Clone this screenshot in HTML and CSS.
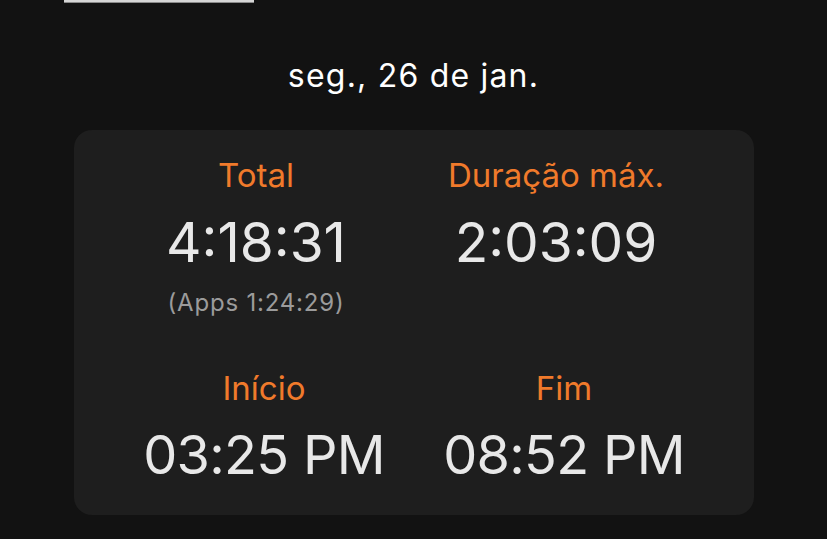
FILE: index.html
```html
<!DOCTYPE html>
<html lang="pt-BR">
<head>
<meta charset="utf-8">
<title>Resumo do dia</title>
<link rel="stylesheet" href="styles.css">
</head>
<body>
  <div class="page">
    <div class="topbar"></div>
    <h1 class="date">seg., 26 de jan.</h1>
    <section class="card">
      <div class="row row-top">
        <div class="cell">
          <div class="label">Total</div>
          <div class="value">4:18:31</div>
          <div class="sub">(Apps 1:24:29)</div>
        </div>
        <div class="cell">
          <div class="label">Duração máx.</div>
          <div class="value">2:03:09</div>
        </div>
      </div>
      <div class="row row-bottom">
        <div class="cell">
          <div class="label">Início</div>
          <div class="value value-time">03:25 PM</div>
        </div>
        <div class="cell">
          <div class="label">Fim</div>
          <div class="value value-time">08:52 PM</div>
        </div>
      </div>
    </section>
  </div>
</body>
</html>
```
FILE: styles.css
```css
* { box-sizing: border-box; }
html, body {
  margin: 0;
  padding: 0;
  background: #121212;
}
body {
  font-family: Inter, "Noto Sans", "Liberation Sans", sans-serif;
  color: #e6e6e6;
  width: 827px;
  height: 539px;
  overflow: hidden;
}
.page {
  display: flex;
  flex-direction: column;
  align-items: stretch;
}
.topbar {
  width: 190px;
  height: 3px;
  margin-left: 64px;
  background: #d6d6d6;
  border-bottom: 1px solid #8a8a8a;
}
.date {
  margin: 53px 0 0;
  font-size: 32px;
  line-height: 40px;
  font-weight: 400;
  letter-spacing: 1.2px;
  text-align: center;
  color: #ffffff;
}
.card {
  margin: 34px 0 0 74px;
  width: 680px;
  height: 385px;
  background: #1e1e1e;
  border-radius: 18px;
  padding: 25px 40px 0;
  display: flex;
  flex-direction: column;
  gap: 50px;
}
.row {
  display: grid;
  grid-template-columns: 1fr 1fr;
  align-items: start;
}
.row-top {
  margin: 0 8px 0 -8px;
}
.cell {
  display: flex;
  flex-direction: column;
  align-items: center;
  gap: 15px;
}
.label {
  font-size: 33px;
  line-height: 40px;
  color: #f07a2b;
}
.value {
  font-size: 55px;
  line-height: 64px;
  color: #e8e8e8;
  margin-bottom: -1px;
}
.value-time {
  font-size: 54px;
  letter-spacing: -0.7px;
}
.sub {
  font-size: 24px;
  line-height: 30px;
  letter-spacing: 0.8px;
  color: #9b9b9b;
}
```
